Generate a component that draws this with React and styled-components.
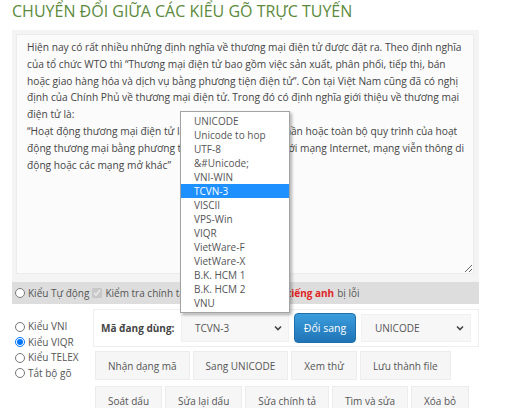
import React from "react";
import styled, { createGlobalStyle } from "styled-components";

const GlobalStyle = createGlobalStyle`
  * { box-sizing: border-box; }
  body {
    margin: 0;
    background: #fff;
    font-family: "Open Sans", "Noto Sans", sans-serif;
    color: #555;
  }
`;

const Page = styled.div`
  width: 467px;
  margin-left: 12px;
`;

const Title = styled.h1`
  margin: 0 0 8px;
  font-size: 16px;
  line-height: 22px;
  font-weight: 400;
  color: #5b8a3c;
  white-space: nowrap;
`;

const EditorPanel = styled.div`
  background: #f4f4f4;
  padding: 4px 5px 8px 4px;
`;

const Editor = styled.textarea`
  display: block;
  width: 100%;
  height: 240px;
  margin: 0;
  padding: 4px 7px 4px 10px;
  border: 1px solid #ececec;
  background: #fbfbfb;
  font-family: inherit;
  font-size: 10.2px;
  line-height: 16.8px;
  color: #444;
  outline: none;
`;

const OptionsBar = styled.div`
  display: flex;
  align-items: center;
  height: 22px;
  padding-left: 3px;
  background: #ddd;
  font-size: 10px;
  color: #555;
  white-space: nowrap;
`;

const Choice = styled.label`
  display: flex;
  align-items: center;
  gap: 3px;
  margin-right: 3px;
  line-height: ${(p) => p.$lh || "16px"};

  input {
    width: 10px;
    height: 10px;
    margin: 0;
  }
`;

const Warn = styled.b`
  color: #e02424;
  margin-left: 3px;
`;

const Lower = styled.div`
  display: flex;
  align-items: flex-start;
  padding-top: 5px;
`;

const ModeList = styled.div`
  width: 81px;
  padding: 10px 0 0 3px;
  font-size: 10px;
  color: #555;
`;

const ToolBox = styled.div`
  flex: 1;
  display: flex;
  flex-direction: column;
`;

const ConvertRow = styled.div`
  display: flex;
  align-items: center;
  height: 38px;
  padding: 0 7px;
  border: 1px solid #efefef;
  background: #fff;
  font-size: 10px;
`;

const FieldLabel = styled.b`
  color: #444;
  width: 80px;
`;

const SelectWrap = styled.div`
  position: relative;
`;

const SelectBox = styled.div`
  display: flex;
  align-items: center;
  justify-content: space-between;
  width: ${(p) => p.$w}px;
  height: 28px;
  padding: 0 6px 0 13px;
  background: #f7f7f7;
  border: 1px solid #f0f0f0;
  color: #555;
`;

const OptionList = styled.ul`
  position: absolute;
  left: -1px;
  bottom: calc(100% + 1px);
  z-index: 10;
  width: 110px;
  margin: 0;
  padding: 2px 0;
  list-style: none;
  background: #fff;
  border: 1px solid #a3a3a3;
  box-shadow: 2px 2px 3px rgba(0, 0, 0, 0.28);
`;

const OptionItem = styled.li`
  height: 14px;
  line-height: 14px;
  padding-left: 13px;
  font-size: 10px;
  color: ${(p) => (p.$active ? "#fff" : "#555")};
  background: ${(p) => (p.$active ? "#1e90ff" : "transparent")};
`;

const ConvertButton = styled.button`
  width: 62px;
  height: 30px;
  margin: 0 5px;
  border: 1px solid #1f70a9;
  border-radius: 4px;
  background: linear-gradient(#3c9ddc, #1f74b6);
  color: #fff;
  font-family: inherit;
  font-size: 10.5px;
`;

const ButtonRow = styled.div`
  display: flex;
  gap: 3px;
  padding-left: 2px;
  margin-top: ${(p) => p.$mt}px;
`;

const ToolButton = styled.button`
  flex-shrink: 0;
  height: 29px;
  padding: 0 12px;
  border: 1px solid #ececec;
  background: #f6f6f6;
  color: #555;
  font-family: inherit;
  font-size: 10px;
  white-space: nowrap;
`;

function Chevron() {
  return (
    <svg width="8" height="6" viewBox="0 0 8 6">
      <path d="M1 1.5 L4 4.5 L7 1.5" fill="none" stroke="#444" strokeWidth="1.6" />
    </svg>
  );
}

const text =
  "Hiện nay có rất nhiều những định nghĩa về thương mại điện tử được đặt ra. Theo định nghĩa của tổ chức WTO thì “Thương mại điện tử bao gồm việc sản xuất, phân phối, tiếp thị, bán hoặc giao hàng hóa và dịch vụ bằng phương tiện điện tử”. Còn tại Việt Nam cũng đã có nghị định của Chính Phủ về thương mại điện tử. Trong đó có định nghĩa giới thiệu về thương mại điện tử là:\n“Hoạt động thương mại điện tử là việc tiến hành một phần hoặc toàn bộ quy trình của hoạt động thương mại bằng phương tiện điện tử có kết nối với mạng Internet, mạng viễn thông di động hoặc các mạng mở khác”";

const encodings = [
  "UNICODE",
  "Unicode to hop",
  "UTF-8",
  "&#Unicode;",
  "VNI-WIN",
  "TCVN-3",
  "VISCII",
  "VPS-Win",
  "VIQR",
  "VietWare-F",
  "VietWare-X",
  "B.K. HCM 1",
  "B.K. HCM 2",
  "VNU",
];

export default function App() {
  return (
    <Page>
      <GlobalStyle />
      <Title>CHUYỂN ĐỔI GIỮA CÁC KIỂU GÕ TRỰC TUYẾN</Title>
      <EditorPanel>
        <Editor defaultValue={text} spellCheck={false} />
      </EditorPanel>
      <OptionsBar>
        <Choice>
          <input type="radio" name="mode" />
          Kiểu Tự động
        </Choice>
        <Choice>
          <input type="checkbox" checked disabled readOnly />
          Kiểm tra chính tả, bỏ qua các từ trong
          <Warn>tiếng anh</Warn>bị lỗi
        </Choice>
      </OptionsBar>
      <Lower>
        <ModeList>
          <Choice $lh="15.5px">
            <input type="radio" name="mode" />
            Kiểu VNI
          </Choice>
          <Choice $lh="15.5px">
            <input type="radio" name="mode" defaultChecked />
            Kiểu VIQR
          </Choice>
          <Choice $lh="15.5px">
            <input type="radio" name="mode" />
            Kiểu TELEX
          </Choice>
          <Choice $lh="15.5px">
            <input type="radio" name="mode" />
            Tắt bộ gõ
          </Choice>
        </ModeList>
        <ToolBox>
          <ConvertRow>
            <FieldLabel>Mã đang dùng:</FieldLabel>
            <SelectWrap>
              <SelectBox $w={108}>
                TCVN-3
                <Chevron />
              </SelectBox>
              <OptionList>
                {encodings.map((e) => (
                  <OptionItem key={e} $active={e === "TCVN-3"}>
                    {e}
                  </OptionItem>
                ))}
              </OptionList>
            </SelectWrap>
            <ConvertButton>Đổi sang</ConvertButton>
            <SelectBox $w={110}>
              UNICODE
              <Chevron />
            </SelectBox>
          </ConvertRow>
          <ButtonRow $mt={4}>
            <ToolButton>Nhận dạng mã</ToolButton>
            <ToolButton>Sang UNICODE</ToolButton>
            <ToolButton>Xem thử</ToolButton>
            <ToolButton>Lưu thành file</ToolButton>
          </ButtonRow>
          <ButtonRow $mt={6}>
            <ToolButton>Soát dấu</ToolButton>
            <ToolButton>Sửa lại dấu</ToolButton>
            <ToolButton>Sửa chính tả</ToolButton>
            <ToolButton>Tìm và sửa</ToolButton>
            <ToolButton>Xóa bỏ</ToolButton>
          </ButtonRow>
        </ToolBox>
      </Lower>
    </Page>
  );
}
